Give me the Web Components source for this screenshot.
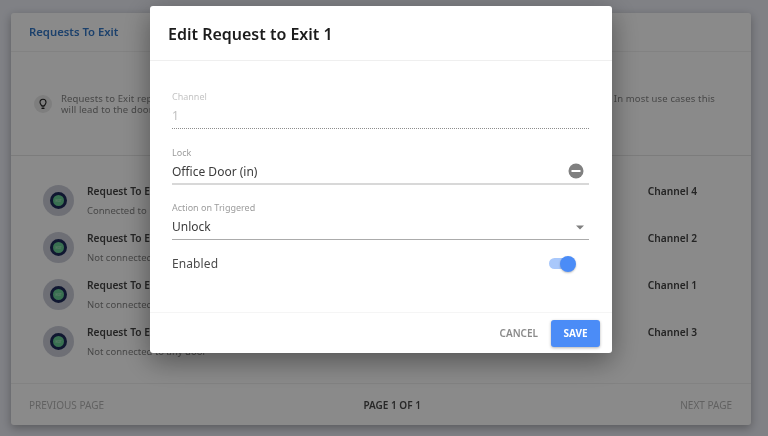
<!DOCTYPE html>
<html lang="en">
<head>
<meta charset="utf-8">
<title>Requests To Exit</title>
<style>
  html, body { margin: 0; height: 100%; overflow: hidden; }
  body { background: #eceef6; font-family: "Noto Sans", Arial, sans-serif; }
</style>
</head>
<body>
<exit-page>
  <exit-row name="Request To Exit 4" note="Connected to Door 1" channel="Channel 4"></exit-row>
  <exit-row name="Request To Exit 2" note="Not connected to any door" channel="Channel 2"></exit-row>
  <exit-row name="Request To Exit 1" note="Not connected to any door" channel="Channel 1"></exit-row>
  <exit-row name="Request To Exit 3" note="Not connected to any door" channel="Channel 3"></exit-row>
</exit-page>
<edit-dialog heading="Edit Request to Exit 1">
  <form-field label="Channel" value="1" kind="disabled"></form-field>
  <form-field label="Lock" value="Office Door (in)" kind="clear"></form-field>
  <form-field label="Action on Triggered" value="Unlock" kind="select"></form-field>
  <toggle-row label="Enabled"></toggle-row>
</edit-dialog>

<script>
class ExitPage extends HTMLElement {
  constructor() {
    super();
    this.attachShadow({ mode: 'open' });
    this.shadowRoot.innerHTML = `
      <style>
        :host { display: block; padding: 13px 17px 11px 11px; height: 436px; box-sizing: border-box; filter: blur(.35px); }
        .card {
          height: 412px;
          background: #fff;
          border-radius: 3px;
          box-shadow: 0 3px 10px rgba(0,0,0,.3);
          display: flex;
          flex-direction: column;
        }
        .title {
          height: 39px;
          box-sizing: border-box;
          padding: 11px 18px 0;
          font-size: 11.3px;
          font-weight: 600;
          color: #3478c8;
          border-bottom: 1px solid #f1f1f1;
        }
        .info {
          height: 104px;
          box-sizing: border-box;
          padding: 0 30px 0 23px;
          display: flex;
          align-items: center;
          gap: 9px;
          font-size: 9.5px;
          line-height: 11px;
          letter-spacing: .14px;
          color: #858585;
          border-bottom: 1px solid #e6e6e6;
        }
        .bulb {
          flex: none;
          width: 18px;
          height: 18px;
          border-radius: 50%;
          background: #e9e9e9;
          display: flex;
          align-items: center;
          justify-content: center;
        }
        .list { flex: 1; padding: 28px 0 0; }
        .foot {
          height: 42px;
          flex: none;
          box-sizing: border-box;
          padding: 0 19px 0 18px;
          display: flex;
          align-items: center;
          justify-content: space-between;
          font-size: 10px;
          color: #b4b4b4;
          border-top: 1px solid #f1f1f1;
        }
        .foot b { font-weight: 600; color: #4a4a4a; }
      </style>
      <div class="card">
        <div class="title">Requests To Exit</div>
        <div class="info">
          <span class="bulb">
            <svg width="12" height="12" viewBox="0 0 24 24" fill="none" stroke="#222" stroke-width="2.2">
              <path d="M9 21h6M9.5 18h5M9 15.5c0-2-3-3.2-3-7a6 6 0 0 1 12 0c0 3.800-3 5-3 7z"/>
            </svg>
          </span>
          <span>Requests to Exit represent physical buttons or sensors that can be used to trigger an action on the connected door lock. In most use cases this<br>will lead to the door being unlocked.</span>
        </div>
        <div class="list"><slot></slot></div>
        <div class="foot"><span>PREVIOUS PAGE</span><b>PAGE 1 OF 1</b><span>NEXT PAGE</span></div>
      </div>`;
  }
}
customElements.define('exit-page', ExitPage);

class ExitRow extends HTMLElement {
  constructor() {
    super();
    this.attachShadow({ mode: 'open' });
    this.shadowRoot.innerHTML = `
      <style>
        :host { display: flex; height: 47px; box-sizing: border-box; padding: 0 54px 0 32px; align-items: flex-start; }
        .icon {
          flex: none;
          width: 31px;
          height: 31px;
          margin-top: 1px;
          border-radius: 50%;
          background: #ccced9;
          display: flex;
          align-items: center;
          justify-content: center;
        }
        .ring {
          width: 17px;
          height: 17px;
          box-sizing: border-box;
          border-radius: 50%;
          background: #6ad096;
          border: 3px solid #1f2c5c;
          display: flex;
          align-items: center;
          justify-content: center;
          font-size: 3px;
          color: #bfe9d0;
        }
        .text { flex: 1; padding-left: 13px; }
        .name { font-size: 10.2px; font-weight: 600; color: #444; line-height: 14px; }
        .note { font-size: 9.5px; color: #858585; line-height: 13px; margin-top: 6px; }
        .channel { font-size: 10.2px; font-weight: 600; color: #444; line-height: 14px; }
      </style>
      <span class="icon"><span class="ring">EXIT</span></span>
      <div class="text">
        <div class="name">${this.getAttribute('name')}</div>
        <div class="note">${this.getAttribute('note')}</div>
      </div>
      <div class="channel">${this.getAttribute('channel')}</div>`;
  }
}
customElements.define('exit-row', ExitRow);

class EditDialog extends HTMLElement {
  constructor() {
    super();
    this.attachShadow({ mode: 'open' });
    this.shadowRoot.innerHTML = `
      <style>
        :host { display: block; position: fixed; inset: 0; background: rgba(0,0,0,.46); }
        .box {
          position: absolute;
          left: 150px;
          top: 6px;
          width: 462px;
          height: 347px;
          background: #fff;
          border-radius: 3px;
          box-shadow: 0 8px 28px rgba(0,0,0,.4);
          display: flex;
          flex-direction: column;
        }
        header {
          height: 55px;
          flex: none;
          box-sizing: border-box;
          padding: 17px 18px 0;
          font-size: 16px;
          line-height: 22px;
          font-weight: 600;
          color: #1c1c1c;
          border-bottom: 1px solid #efefef;
        }
        .body { flex: 1; padding: 27px 23px 0 22px; }
        footer {
          height: 40px;
          flex: none;
          padding: 0 12px 0 0;
          display: flex;
          align-items: center;
          justify-content: flex-end;
          gap: 13px;
          border-top: 1px solid #f5f5f5;
        }
        .cancel { font-size: 10px; font-weight: 600; color: #8a8a8a; }
        .save {
          width: 49px;
          height: 27px;
          border-radius: 3px;
          background: #4b8cf7;
          box-shadow: 0 1px 3px rgba(0,0,0,.3);
          color: #fff;
          font-size: 10px;
          font-weight: 700;
          display: flex;
          align-items: center;
          justify-content: center;
        }
      </style>
      <div class="box">
        <header>${this.getAttribute('heading')}</header>
        <div class="body"><slot></slot></div>
        <footer><span class="cancel">CANCEL</span><span class="save">SAVE</span></footer>
      </div>`;
  }
}
customElements.define('edit-dialog', EditDialog);

class FormField extends HTMLElement {
  constructor() {
    super();
    const kind = this.getAttribute('kind');
    let tail = '';
    if (kind === 'clear') {
      tail = `<svg class="tail" width="16" height="16" viewBox="0 0 16 16"><circle cx="8" cy="8" r="7.500" fill="#808080"/><rect x="3.500" y="7" width="9" height="2" fill="#fff"/></svg>`;
    }
    if (kind === 'select') {
      tail = `<svg class="tail" width="16" height="16" viewBox="0 0 16 16"><path d="M4 6.500h8L8 10.500z" fill="#808080"/></svg>`;
    }
    this.attachShadow({ mode: 'open' });
    this.shadowRoot.innerHTML = `
      <style>
        :host { display: block; height: 55.500px; }
        .label { font-size: 9px; line-height: 12px; color: #9c9c9c; padding-top: 3px; }
        .line {
          display: flex;
          align-items: center;
          justify-content: space-between;
          height: 22px;
          box-sizing: border-box;
          margin-top: 4px;
          padding-bottom: 4px;
          font-size: 12px;
          color: #3c3c3c;
          border-bottom: 1px solid #ababab;
        }
        :host([kind="clear"]) .line { border-bottom: 2px solid #d8d8d8; padding-bottom: 3px; }
        :host([kind="disabled"]) .label { color: #c4c4c4; }
        :host([kind="disabled"]) .line { color: #c0c0c0; border-bottom: 1px dotted #8d8d8d; }
        .tail { margin-right: 5px; flex: none; }
        :host([kind="select"]) .tail { margin-right: 1px; }
      </style>
      <div class="label">${this.getAttribute('label')}</div>
      <div class="line"><span>${this.getAttribute('value')}</span>${tail}</div>`;
  }
}
customElements.define('form-field', FormField);

class ToggleRow extends HTMLElement {
  constructor() {
    super();
    this.attachShadow({ mode: 'open' });
    this.shadowRoot.innerHTML = `
      <style>
        :host { display: flex; align-items: center; justify-content: space-between; height: 20px; margin-top: -1px; font-size: 12px; color: #4a4a4a; letter-spacing: .1px; }
        .track { position: relative; width: 23px; height: 11px; border-radius: 6px; background: #a9c8fb; margin-right: 17px; }
        .knob { position: absolute; right: -4px; top: -2.500px; width: 16px; height: 16px; border-radius: 50%; background: #4b8cf7; box-shadow: 0 1px 2px rgba(0,0,0,.25); }
      </style>
      <span>${this.getAttribute('label')}</span>
      <span class="track"><span class="knob"></span></span>`;
  }
}
customElements.define('toggle-row', ToggleRow);
</script>
</body>
</html>
